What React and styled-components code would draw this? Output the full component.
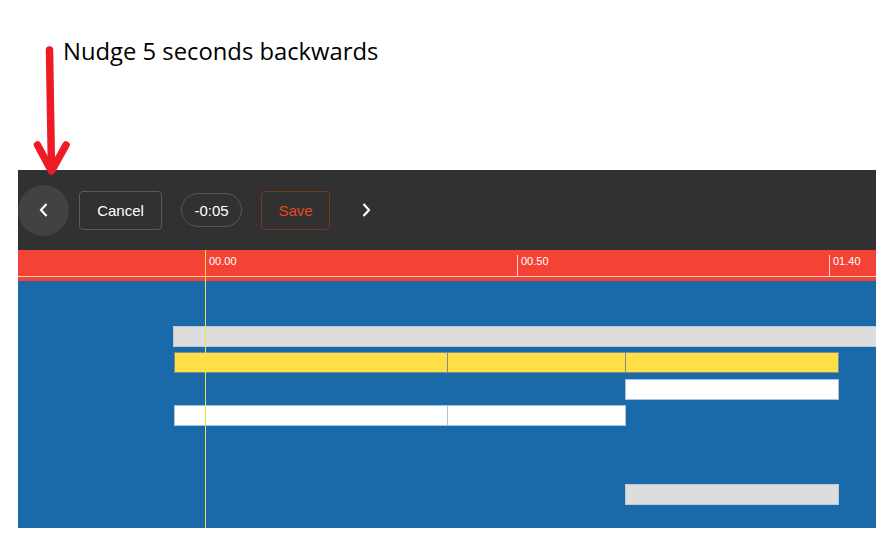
import React from "react";
import styled, { createGlobalStyle } from "styled-components";

const GlobalStyle = createGlobalStyle`
  html, body {
    margin: 0;
    background: #fff;
  }
  * {
    box-sizing: border-box;
  }
`;

const Page = styled.div`
  position: relative;
  width: 891px;
  height: 544px;
  overflow: hidden;
  font-family: Arial, "Liberation Sans", sans-serif;
`;

const Caption = styled.div`
  height: 170px;
  padding: 35px 0 0 63px;
  font-family: "Open Sans", "Noto Sans", sans-serif;
  font-size: 23.8px;
  line-height: 32px;
  color: #000;
`;

const Annotation = styled.svg`
  position: absolute;
  left: 0;
  top: 0;
  pointer-events: none;
`;

const Editor = styled.div`
  margin-left: 18px;
  width: 858px;
`;

const Toolbar = styled.div`
  height: 80px;
  background: #313131;
  display: flex;
  align-items: center;
`;

const RoundButton = styled.button`
  width: 51px;
  height: 51px;
  border-radius: 50%;
  border: none;
  background: #424242;
  display: flex;
  align-items: center;
  justify-content: center;
  padding: 0;
  margin-right: 10px;
`;

const TextButton = styled.button`
  height: 39px;
  width: ${(p) => p.$w}px;
  margin-right: 19px;
  border-radius: 4px;
  background: transparent;
  border: 1px solid ${(p) => (p.$accent ? "#7c3523" : "#5a5a5a")};
  color: ${(p) => (p.$accent ? "#e5481f" : "#fff")};
  font-family: Arial, "Liberation Sans", sans-serif;
  font-size: 15px;
  padding: 0;
`;

const OffsetPill = styled.div`
  height: 34px;
  width: 61px;
  margin-right: 19px;
  border-radius: 17px;
  border: 1px solid #575757;
  color: #fff;
  font-size: 15px;
  display: flex;
  align-items: center;
  justify-content: center;
`;

const IconButton = styled.button`
  width: 24px;
  height: 24px;
  margin-left: 5px;
  border: none;
  background: transparent;
  padding: 0;
  display: flex;
  align-items: center;
  justify-content: center;
`;

const Track = styled.div`
  position: relative;
`;

const Ruler = styled.div`
  position: relative;
  height: 31px;
  background: #f44336;

  &::after {
    content: "";
    position: absolute;
    left: 0;
    right: 0;
    top: 26px;
    height: 1px;
    background: #f9cfc7;
  }
`;

const Tick = styled.div`
  position: absolute;
  top: 5px;
  height: 21px;
  border-left: 1px solid #fbd5cf;
  padding-left: 3px;
  color: #fff;
  font-size: 11px;
  line-height: 12px;
`;

const Lanes = styled.div`
  height: 247px;
  background: #1a69a9;
  padding-top: 45px;
  display: flex;
  flex-direction: column;
  gap: 5.33px;
`;

const Lane = styled.div`
  position: relative;
  height: 21px;
`;

const clipColors = {
  gray: { bg: "#dddddd", border: "#b9c9d8" },
  yellow: { bg: "#fedf47", border: "#7d9188" },
  white: { bg: "#ffffff", border: "#a9c3dc" },
};

const Clip = styled.div`
  position: absolute;
  top: 0;
  height: 21px;
  background: ${(p) => clipColors[p.$kind].bg};
  border: 1px solid ${(p) => clipColors[p.$kind].border};
  border-right-color: ${(p) => (p.$open ? clipColors[p.$kind].bg : clipColors[p.$kind].border)};
`;

const Playhead = styled.div`
  position: absolute;
  top: 0;
  bottom: 0;
  width: 1px;
  background: #e9e545;
  pointer-events: none;
`;

const ORIGIN = 187;
const PX_PER_UNIT = 6.24;

const ticks = [
  { t: 0, label: "00.00" },
  { t: 50, label: "00.50" },
  { t: 100, label: "01.40" },
];

const lanes = [
  [{ kind: "gray", x: 155, w: 703, open: true }],
  [
    { kind: "yellow", x: 156, w: 274 },
    { kind: "yellow", x: 429, w: 179 },
    { kind: "yellow", x: 607, w: 214 },
  ],
  [{ kind: "white", x: 607, w: 214 }],
  [
    { kind: "white", x: 156, w: 274 },
    { kind: "white", x: 429, w: 179 },
  ],
  [],
  [],
  [{ kind: "gray", x: 607, w: 214 }],
];

const Chevron = ({ dir }) => (
  <svg width="10" height="14" viewBox="0 0 10 14">
    <polyline
      points={dir === "left" ? "7.5,1 2,7 7.5,13" : "2.5,1 8,7 2.5,13"}
      fill="none"
      stroke="#fff"
      strokeWidth="2.2"
    />
  </svg>
);

export default function App() {
  return (
    <Page>
      <GlobalStyle />
      <Caption>Nudge 5 seconds backwards</Caption>

      <Editor>
        <Toolbar>
          <RoundButton>
            <Chevron dir="left" />
          </RoundButton>
          <TextButton $w={83}>Cancel</TextButton>
          <OffsetPill>-0:05</OffsetPill>
          <TextButton $w={69} $accent>
            Save
          </TextButton>
          <IconButton>
            <Chevron dir="right" />
          </IconButton>
        </Toolbar>

        <Track>
          <Ruler>
            {ticks.map((tk) => (
              <Tick key={tk.label} style={{ left: ORIGIN + tk.t * PX_PER_UNIT }}>
                {tk.label}
              </Tick>
            ))}
          </Ruler>
          <Lanes>
            {lanes.map((clips, i) => (
              <Lane key={i}>
                {clips.map((c, j) => (
                  <Clip
                    key={j}
                    $kind={c.kind}
                    $open={c.open}
                    style={{ left: c.x, width: c.w }}
                  />
                ))}
              </Lane>
            ))}
          </Lanes>
          <Playhead style={{ left: ORIGIN }} />
        </Track>
      </Editor>

      <Annotation width="891" height="544">
        <g stroke="#ed1c24" strokeWidth="7.5" strokeLinecap="round" strokeLinejoin="round" fill="none">
          <line x1="49.5" y1="50" x2="51.5" y2="170" />
          <polyline points="37.5,145 51.5,171 66,145" />
        </g>
      </Annotation>
    </Page>
  );
}
